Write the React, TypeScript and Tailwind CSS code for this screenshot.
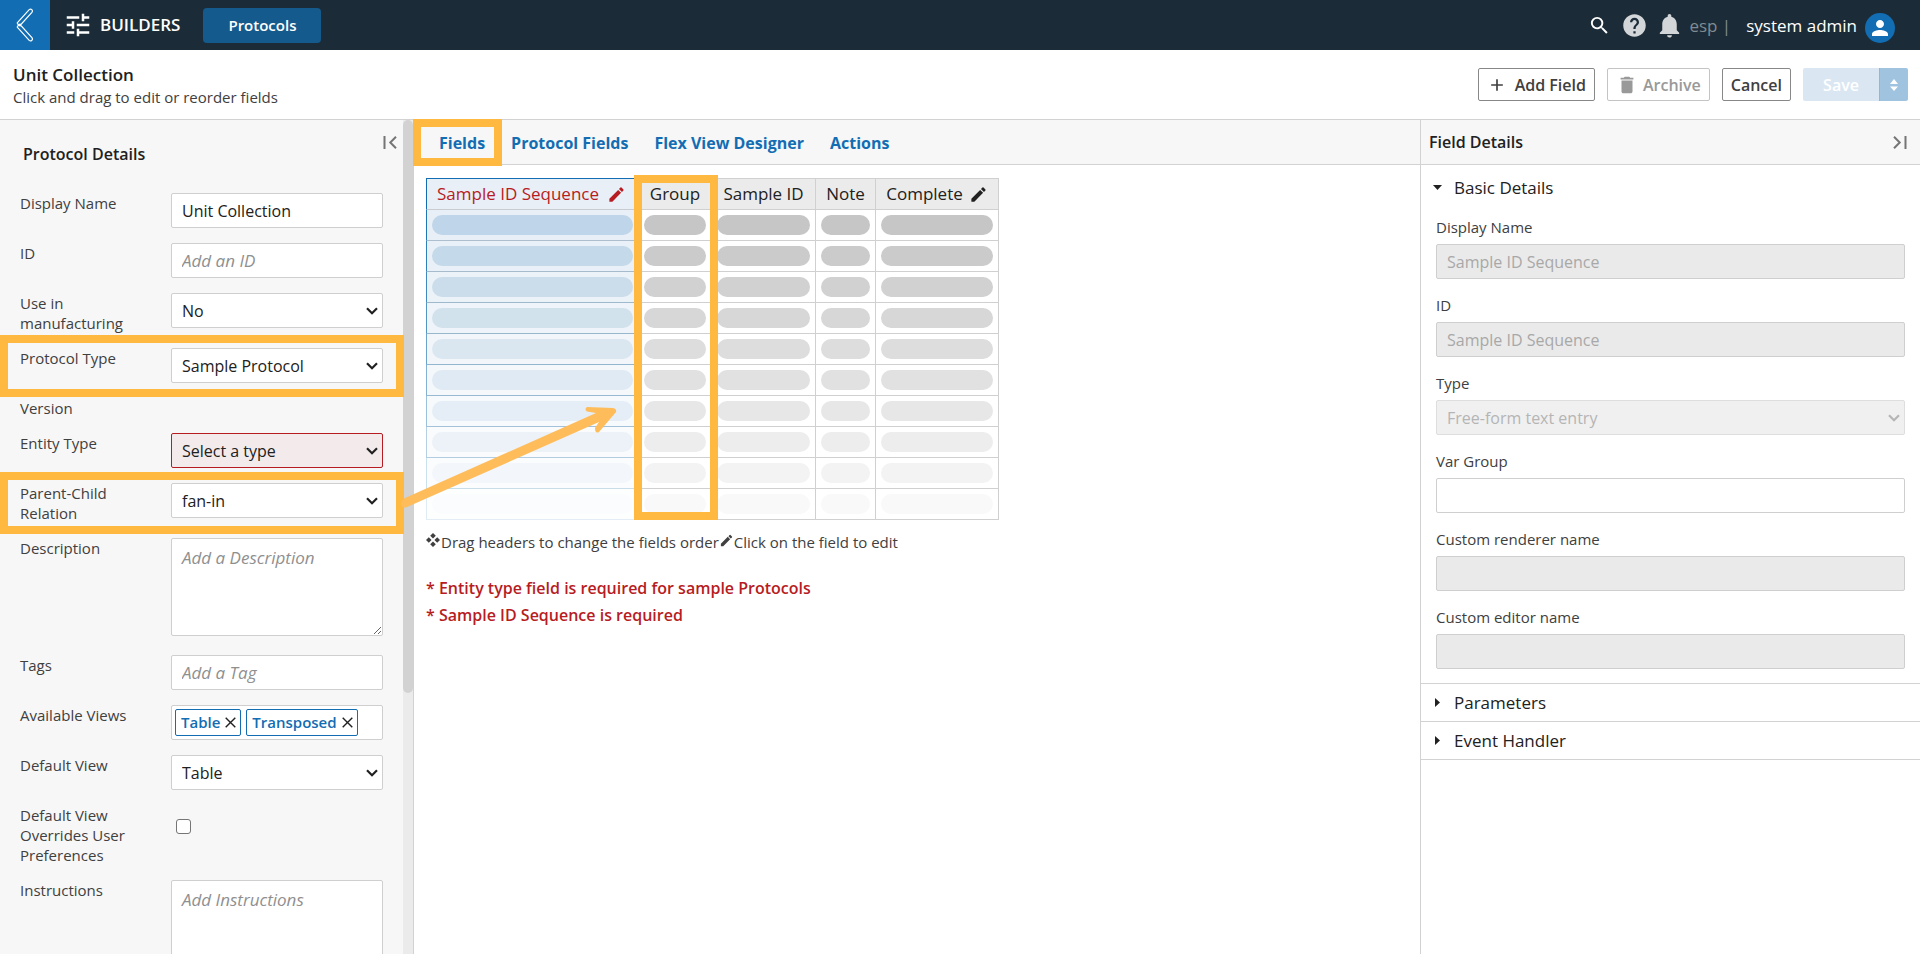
import React from "react";
import {
  MdAdd,
  MdDelete,
  MdEdit,
  MdHelp,
  MdNotifications,
  MdPerson,
  MdSearch,
  MdTune,
} from "react-icons/md";

const columns = [
  { name: "Group", editable: false },
  { name: "Sample ID", editable: false },
  { name: "Note", editable: false },
  { name: "Complete", editable: true },
];

// Placeholder rows fade out towards the bottom of the preview table
const rows = [
  { pill: "bg-[#c6c6c6]", active: "bg-[#bfd5e9]", cell: "bg-[#e8eff7] border-l-[#1f76b7] border-b-[#adbfce]" },
  { pill: "bg-[#cbcbcb]", active: "bg-[#c4d9e9]", cell: "bg-[#e9f0f7] border-l-[#2f7fbb] border-b-[#a6bccc]" },
  { pill: "bg-[#d1d1d1]", active: "bg-[#cbddeb]", cell: "bg-[#ebf2f8] border-l-[#4089c0] border-b-[#9fb9cc]" },
  { pill: "bg-[#d7d7d7]", active: "bg-[#d1e2ed]", cell: "bg-[#eef4fa] border-l-[#5294c4] border-b-[#98b7cd]" },
  { pill: "bg-[#dddddd]", active: "bg-[#dae7f1]", cell: "bg-[#f2f6fa] border-l-[#6aa2cb] border-b-[#92b6d0]" },
  { pill: "bg-[#e1e1e1]", active: "bg-[#dfeaf4]", cell: "bg-[#f4f8fb] border-l-[#83b0d3] border-b-[#97b9d2]" },
  { pill: "bg-[#e7e7e7]", active: "bg-[#e5eef6]", cell: "bg-[#f7fafc] border-l-[#9cc0dc] border-b-[#a3c2d9]" },
  { pill: "bg-[#ededed]", active: "bg-[#ecf2f8]", cell: "bg-[#f9fbfd] border-l-[#b5d0e5] border-b-[#b2cde0]" },
  { pill: "bg-[#f3f3f3]", active: "bg-[#f3f7fb]", cell: "bg-[#fbfcfe] border-l-[#cbdfed] border-b-[#c9dde9]" },
  { pill: "bg-[#f9f9f9]", active: "bg-[#fbfcfd]", cell: "bg-[#fdfefe] border-l-[#e0ecf5] border-b-[#e2edf5]" },
];

const field = "block w-full rounded-[2px] border border-[#cfcfcf] bg-white px-[10px] text-base text-[#212121]";
const placeholder =
  "placeholder:text-[17px] placeholder:italic placeholder:text-[#8f8f8f] placeholder:opacity-100";

const Highlight = ({ className }: { className: string }) => (
  <div className={`pointer-events-none absolute z-10 border-8 border-[#ffb840] ${className}`} />
);

const Row = ({ id, label, children, mark }: { id: string; label: string; children?: React.ReactNode; mark?: string }) => (
  <div className="relative flex items-start">
    <label htmlFor={id} className="w-[151px] shrink-0 pr-5 text-[15px] leading-5 text-[#404040]">
      {label}
    </label>
    <div className="min-w-0 flex-1">{children}</div>
    {mark && <Highlight className={mark} />}
  </div>
);

const Select = ({ id, value, invalid, disabled }: { id: string; value: string; invalid?: boolean; disabled?: boolean }) => {
  let tone = "border-[#cfcfcf] bg-white text-[#212121]";
  if (invalid) tone = "border-[#b71c22] bg-[#f3ebeb] text-[#212121]";
  if (disabled) tone = "border-[#dedede] bg-[#f0f0f0] text-[#b5b5b5]";
  return (
    <div className="relative">
      <select
        id={id}
        disabled={disabled}
        className={`block h-[35px] w-full appearance-none rounded-[2px] border px-[10px] text-base opacity-100 ${tone}`}
      >
        <option>{value}</option>
      </select>
      <svg
        viewBox="0 0 12 8"
        className={`pointer-events-none absolute right-[5px] top-[14px] h-2 w-3 ${disabled ? "text-[#b5b5b5]" : "text-[#212121]"}`}
        fill="none"
        stroke="currentColor"
        strokeWidth="2.2"
      >
        <path d="M1 1.2 6 6.2 11 1.2" />
      </svg>
    </div>
  );
};

const Chip = ({ text }: { text: string }) => (
  <span className="flex h-[27px] items-center gap-[5px] rounded-[2px] border border-[#126db3] bg-white pl-[5px] pr-1 text-[15px] font-semibold text-[#126db3]">
    {text}
    <button type="button" aria-label={`Remove ${text}`} className="text-[#212121]">
      <svg width="11" height="11" viewBox="0 0 11 11" fill="none" stroke="currentColor" strokeWidth="1.4">
        <path d="M.7.7 10.3 10.3M10.3.7.7 10.3" />
      </svg>
    </button>
  </span>
);

const DetailField = ({ id, label, children }: { id: string; label: string; children: React.ReactNode }) => (
  <div>
    <label htmlFor={id} className="mb-[7px] block text-[15px] leading-5 text-[#404040]">
      {label}
    </label>
    {children}
  </div>
);

const disabledField =
  "block h-[35px] w-full rounded-[2px] border border-[#cfcfcf] bg-[#eaeaea] px-[10px] text-base text-[#a8a8a8]";

const TopBar = () => (
  <header className="flex h-[50px] shrink-0 items-center bg-[#1b2c38] text-white">
    <button type="button" aria-label="Back" className="flex h-full w-[50px] items-center justify-center bg-[#126db3]">
      <svg width="18" height="34" viewBox="0 0 18 34" fill="none" stroke="currentColor" strokeWidth="1.2">
        <path d="M1 15.2 13.2 1.6Q14.6.4 15.8 1.7 17 3 15.9 4.4L4.4 17 15.9 29.6Q17 31 15.8 32.3 14.6 33.6 13.2 32.4L1 18.8M1 15.2 4.4 18.2M1 18.8 4.4 15.8" />
      </svg>
    </button>
    <MdTune size={30} className="ml-[13px]" />
    <span className="ml-[7px] text-[17px] font-semibold">BUILDERS</span>
    <button type="button" className="ml-[23px] h-[35px] rounded bg-[#155a8c] px-[25px] text-[15px] font-semibold">
      Protocols
    </button>
    <div className="ml-auto flex items-center pr-[25px] pt-px">
      <button type="button" aria-label="Search">
        <MdSearch size={23} />
      </button>
      <button type="button" aria-label="Help" className="ml-[10px] text-[#d2d6d9]">
        <MdHelp size={27} />
      </button>
      <button type="button" aria-label="Notifications" className="ml-[7px] text-[#d2d6d9]">
        <MdNotifications size={29} />
      </button>
      <span className="ml-[5px] text-[17px] text-[#808b92]">esp |</span>
      <span className="ml-[15px] text-[17px]">system admin</span>
      <span className="ml-2 mt-1 flex size-[30px] items-center justify-center rounded-full bg-[#126db3]">
        <MdPerson size={24} />
      </span>
    </div>
  </header>
);

const TitleBar = () => (
  <div className="flex h-[70px] shrink-0 items-center border-b border-[#d2d2d2] bg-white pl-[13px] pr-3">
    <div>
      <h1 className="text-[17px] font-semibold leading-6 text-[#212121]">Unit Collection</h1>
      <p className="text-[15px] leading-5 text-[#404040]">Click and drag to edit or reorder fields</p>
    </div>
    <div className="ml-auto flex gap-3 text-base font-semibold">
      <button
        type="button"
        className="flex h-[33px] items-center rounded-[2px] border border-[#888888] px-2 text-[#404040]"
      >
        <MdAdd size={20} className="mr-2" />
        Add Field
      </button>
      <button
        type="button"
        disabled
        className="flex h-[33px] items-center rounded-[2px] border border-[#c4c4c4] px-2 text-[#999999]"
      >
        <MdDelete size={22} className="mr-[5px]" />
        Archive
      </button>
      <button type="button" className="h-[33px] rounded-[2px] border border-[#888888] px-2 text-[#404040]">
        Cancel
      </button>
      <div className="flex h-[33px]">
        <button type="button" disabled className="w-[76px] rounded-l-[2px] bg-[#dae7f3] text-white">
          Save
        </button>
        <button
          type="button"
          disabled
          aria-label="Save options"
          className="flex w-[29px] items-center justify-center rounded-r-[2px] border-l border-[#8fb8d8] bg-[#a0c4e0] text-white"
        >
          <svg width="8" height="12" viewBox="0 0 8 12" fill="currentColor">
            <path d="M4 0 8 5H0zM0 7.5h8L4 12z" />
          </svg>
        </button>
      </div>
    </div>
  </div>
);

const ProtocolDetails = () => (
  <aside className="relative w-[414px] shrink-0 border-r border-[#d2d2d2] bg-[#f7f7f7]">
    <div className="h-full overflow-hidden pl-5 pr-[30px] pt-2">
      <div className="flex h-[65px] justify-between">
        <h2 className="pl-[3px] pt-[14px] text-base font-semibold leading-6 text-[#212121]">Protocol Details</h2>
        <button type="button" aria-label="Collapse panel" className="absolute right-4 top-4 text-[#757575]">
          <svg width="14" height="13" viewBox="0 0 14 13" fill="none" stroke="currentColor" strokeWidth="2">
            <path d="M1.5 0v13M13 .8 7.3 6.5 13 12.2" />
          </svg>
        </button>
      </div>
      <form className="flex flex-col gap-[15px]">
        <Row id="display-name" label="Display Name">
          <input id="display-name" defaultValue="Unit Collection" className={`h-[35px] ${field}`} />
        </Row>
        <Row id="protocol-id" label="ID">
          <input id="protocol-id" placeholder="Add an ID" className={`h-[35px] ${field} ${placeholder}`} />
        </Row>
        <Row id="manufacturing" label="Use in manufacturing">
          <Select id="manufacturing" value="No" />
        </Row>
        <Row id="protocol-type" label="Protocol Type" mark="-left-5 -right-[21px] -top-[13px] -bottom-[14px]">
          <Select id="protocol-type" value="Sample Protocol" />
        </Row>
        <div className="text-[15px] leading-5 text-[#404040]">Version</div>
        <Row id="entity-type" label="Entity Type">
          <Select id="entity-type" value="Select a type" invalid />
        </Row>
        <Row id="relation" label="Parent-Child Relation" mark="-left-5 -right-[21px] -top-[11px] -bottom-[11px]">
          <Select id="relation" value="fan-in" />
        </Row>
        <Row id="description" label="Description">
          <textarea
            id="description"
            placeholder="Add a Description"
            className={`mb-1 h-[98px] resize-y py-[7px] leading-6 ${field} ${placeholder}`}
          />
        </Row>
        <Row id="tags" label="Tags">
          <input id="tags" placeholder="Add a Tag" className={`h-[35px] ${field} ${placeholder}`} />
        </Row>
        <Row id="views" label="Available Views">
          <div className="flex h-[35px] items-center gap-[5px] rounded-[2px] border border-[#cfcfcf] bg-white px-[3px]">
            <Chip text="Table" />
            <Chip text="Transposed" />
            <input id="views" className="w-0 min-w-0 flex-1 outline-none" />
          </div>
        </Row>
        <Row id="default-view" label="Default View">
          <Select id="default-view" value="Table" />
        </Row>
        <Row id="overrides" label="Default View Overrides User Preferences">
          <input
            id="overrides"
            type="checkbox"
            className="ml-[5px] mt-[14px] block size-[15px] appearance-none rounded-[3px] border border-[#757575] bg-white"
          />
        </Row>
        <Row id="instructions" label="Instructions">
          <textarea
            id="instructions"
            placeholder="Add Instructions"
            className={`h-[98px] resize-y py-[7px] leading-6 ${field} ${placeholder}`}
          />
        </Row>
      </form>
    </div>
    {/* Scroll track */}
    <div className="absolute inset-y-0 right-0 w-[10px] bg-[#ebebeb]">
      <div className="h-11/16 rounded-full bg-[#d2d2d2]" />
    </div>
  </aside>
);

const FieldsTable = () => (
  <div className="relative w-[573px]">
    <table className="w-full table-fixed border-separate border-spacing-0">
      <colgroup>
        <col className="w-[213px]" />
        <col className="w-[73px]" />
        <col className="w-[104px]" />
        <col className="w-[60px]" />
        <col className="w-[123px]" />
      </colgroup>
      <thead>
        <tr className="h-8 whitespace-nowrap text-[17px] leading-[30px] text-[#212121]">
          <th className="border border-l-[#126db3] border-t-[#126db3] border-b-[#c8ccd0] border-r-[#d0d0d0] bg-[#e8eff7] p-0 pl-[10px] text-left font-normal text-[#b71c22]">
            <span className="flex items-center gap-2">
              Sample ID Sequence <MdEdit size={19} />
            </span>
          </th>
          {columns.map((column) => (
            <th key={column.name} className="border border-l-0 border-[#d0d0d0] bg-[#ebebeb] p-0 font-normal">
              <span className="flex items-center justify-center gap-[6px]">
                {column.name}
                {column.editable && <MdEdit size={19} />}
              </span>
            </th>
          ))}
        </tr>
      </thead>
      <tbody>
        {rows.map((row) => (
          <tr key={row.pill}>
            <td className={`border border-t-0 border-r-[#d0d0d0] p-[5px] ${row.cell}`}>
              <div className={`h-5 rounded-full ${row.active}`} />
            </td>
            {columns.map((column) => (
              <td key={column.name} className="border-b border-r border-[#d0d0d0] bg-white p-[5px]">
                <div className={`h-5 rounded-full ${row.pill}`} />
              </td>
            ))}
          </tr>
        ))}
      </tbody>
    </table>
    <Highlight className="-top-[3px] bottom-0 left-[208px] w-[84px]" />
  </div>
);

const Designer = () => (
  <main className="relative min-w-0 flex-1 bg-white">
    <nav className="flex h-[45px] items-center gap-[26px] border-b border-[#d2d2d2] bg-[#f7f7f7] pl-[25px] pt-[2px] text-base font-bold text-[#126db3]">
      <a href="#fields" className="relative">
        Fields
        <Highlight className="-left-[26px] -right-[17px] -top-[12px] h-[47px]" />
      </a>
      <a href="#protocol-fields">Protocol Fields</a>
      <a href="#flex-view">Flex View Designer</a>
      <a href="#actions">Actions</a>
    </nav>
    <div className="pl-3 pt-[13px]">
      <FieldsTable />
      <p className="mt-3 flex items-center text-[15px] leading-5 text-[#404040]">
        <svg width="14" height="14" viewBox="0 0 14 14" fill="currentColor" className="mb-1 mr-px">
          <path d="M7 0 9.8 2.8 7 5.6 4.2 2.8zM7 8.4l2.8 2.8L7 14l-2.800-2.800zM2.8 4.2 5.6 7 2.8 9.8 0 7zM11.200 4.200 14 7l-2.800 2.800L8.400 7z" />
        </svg>
        Drag headers to change the fields order
        <MdEdit size={15} className="mb-1" />
        Click on the field to edit
      </p>
      <div className="mt-[23px] text-base font-semibold leading-[27px] text-[#b71c22]">
        <p>* Entity type field is required for sample Protocols</p>
        <p>* Sample ID Sequence is required</p>
      </div>
    </div>
    {/* Arrow from the relation setting to the group column */}
    <svg
      className="pointer-events-none absolute -left-[14px] top-[280px] z-20"
      width="224"
      height="112"
      viewBox="0 0 224 112"
      fill="#ffbc5a"
    >
      <path d="M1 104Q1 100 5 98L196 13 187 11.500Q184 9 187 7L213 8Q217 9 216 12L199 32Q195 34 195 28L199 22 7 107Q2 109 1 104Z" />
    </svg>
  </main>
);

const FieldDetails = () => (
  <aside className="w-[500px] shrink-0 border-l border-[#d2d2d2] bg-white text-[17px] text-[#212121]">
    <div className="flex h-[45px] items-center justify-between border-b border-[#d2d2d2] bg-[#f7f7f7] pl-2 pr-[13px]">
      <h2 className="text-base font-semibold">Field Details</h2>
      <button type="button" aria-label="Collapse panel" className="text-[#757575]">
        <svg width="14" height="13" viewBox="0 0 14 13" fill="none" stroke="currentColor" strokeWidth="2">
          <path d="M12.5 0v13M1 .8 6.7 6.5 1 12.2" />
        </svg>
      </button>
    </div>
    <section className="border-b border-[#d2d2d2] pb-[14px]">
      <button type="button" className="flex h-[45px] items-center gap-3 pl-3">
        <svg width="9" height="5" viewBox="0 0 9 5" fill="currentColor">
          <path d="M0 0h9L4.500 5z" />
        </svg>
        Basic Details
      </button>
      <div className="flex flex-col gap-4 px-[15px] pt-[7px]">
        <DetailField id="field-name" label="Display Name">
          <input id="field-name" disabled defaultValue="Sample ID Sequence" className={disabledField} />
        </DetailField>
        <DetailField id="field-id" label="ID">
          <input id="field-id" disabled defaultValue="Sample ID Sequence" className={disabledField} />
        </DetailField>
        <DetailField id="field-type" label="Type">
          <Select id="field-type" value="Free-form text entry" disabled />
        </DetailField>
        <DetailField id="var-group" label="Var Group">
          <input id="var-group" className={`h-[35px] ${field}`} />
        </DetailField>
        <DetailField id="renderer" label="Custom renderer name">
          <input id="renderer" disabled className={disabledField} />
        </DetailField>
        <DetailField id="editor" label="Custom editor name">
          <input id="editor" disabled className={disabledField} />
        </DetailField>
      </div>
    </section>
    {["Parameters", "Event Handler"].map((title) => (
      <button key={title} type="button" className="flex h-[38px] w-full items-center gap-[14px] border-b border-[#d2d2d2] pl-[14px]">
        <svg width="5" height="9" viewBox="0 0 5 9" fill="currentColor">
          <path d="M0 0v9l5-4.500z" />
        </svg>
        {title}
      </button>
    ))}
  </aside>
);

export default function App() {
  return (
    <div className="flex h-screen flex-col overflow-hidden font-['Open_Sans',sans-serif]">
      <TopBar />
      <TitleBar />
      <div className="flex min-h-0 flex-1">
        <ProtocolDetails />
        <Designer />
        <FieldDetails />
      </div>
    </div>
  );
}
